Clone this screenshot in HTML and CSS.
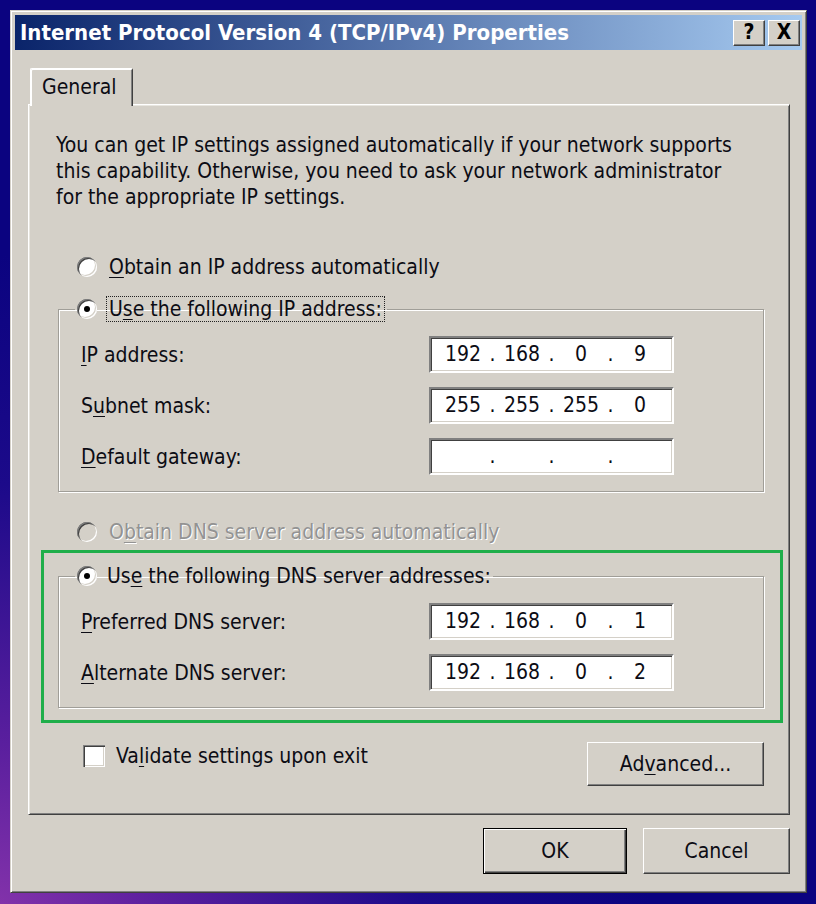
FILE: index.html
```html
<!DOCTYPE html>
<html lang="en">
<head>
  <meta charset="UTF-8">
  <meta name="viewport" content="width=device-width, initial-scale=1.0">
  <title>Internet Protocol Version 4 (TCP/IPv4) Properties</title>
  <link rel="stylesheet" href="styles.css">
</head>
<body>
  <div class="window">
    <div class="titlebar">
      <span class="title">Internet Protocol Version 4 (TCP/IPv4) Properties</span>
      <div class="title-buttons">
        <button class="title-btn">?</button>
        <button class="title-btn">X</button>
      </div>
    </div>

    <div class="client">
      <div class="tabs">
        <div class="tab">General</div>
      </div>

      <div class="panel">
        <p class="intro">You can get IP settings assigned automatically if your network supports<br>
          this capability. Otherwise, you need to ask your network administrator<br>
          for the appropriate IP settings.</p>

        <label class="option first">
          <span class="radio"></span>
          <span><u>O</u>btain an IP address automatically</span>
        </label>

        <fieldset class="group">
          <legend>
            <label class="option">
              <span class="radio checked"></span>
              <span class="focus">U<u>s</u>e the following IP address:</span>
            </label>
          </legend>
          <div class="rows">
            <div class="row">
              <span><u>I</u>P address:</span>
              <div class="ip"><span class="oct">192</span><span class="dot">.</span><span class="oct">168</span><span class="dot">.</span><span class="oct">0</span><span class="dot">.</span><span class="oct">9</span></div>
            </div>
            <div class="row">
              <span>S<u>u</u>bnet mask:</span>
              <div class="ip"><span class="oct">255</span><span class="dot">.</span><span class="oct">255</span><span class="dot">.</span><span class="oct">255</span><span class="dot">.</span><span class="oct">0</span></div>
            </div>
            <div class="row">
              <span><u>D</u>efault gateway:</span>
              <div class="ip"><span class="oct"></span><span class="dot">.</span><span class="oct"></span><span class="dot">.</span><span class="oct"></span><span class="dot">.</span><span class="oct"></span></div>
            </div>
          </div>
        </fieldset>

        <label class="option disabled">
          <span class="radio"></span>
          <span>O<u>b</u>tain DNS server address automatically</span>
        </label>

        <div class="highlight">
          <fieldset class="group">
            <legend>
              <label class="option">
                <span class="radio checked"></span>
                <span class="plain">Us<u>e</u> the following DNS server addresses:</span>
              </label>
            </legend>
            <div class="rows">
              <div class="row">
                <span><u>P</u>referred DNS server:</span>
                <div class="ip"><span class="oct">192</span><span class="dot">.</span><span class="oct">168</span><span class="dot">.</span><span class="oct">0</span><span class="dot">.</span><span class="oct">1</span></div>
              </div>
              <div class="row">
                <span><u>A</u>lternate DNS server:</span>
                <div class="ip"><span class="oct">192</span><span class="dot">.</span><span class="oct">168</span><span class="dot">.</span><span class="oct">0</span><span class="dot">.</span><span class="oct">2</span></div>
              </div>
            </div>
          </fieldset>
        </div>

        <div class="panel-footer">
          <label class="check">
            <span class="checkbox"></span>
            <span>Va<u>l</u>idate settings upon exit</span>
          </label>
          <button class="btn advanced">Ad<u>v</u>anced...</button>
        </div>
      </div>

      <div class="dialog-buttons">
        <button class="btn default">OK</button>
        <button class="btn cancel">Cancel</button>
      </div>
    </div>
  </div>
</body>
</html>
```

FILE: styles.css
```css
* {
  box-sizing: border-box;
}
body {
  margin: 0;
  height: 904px;
  padding: 10px 9px 0 10px;
  font-family: "DejaVu Sans Condensed", "DejaVu Sans", sans-serif;
  font-stretch: condensed;
  font-size: 21px;
  color: #0c0c14;
  background: radial-gradient(circle at 0 100%, #8232aa 0, #5a1f9e 160px, #1c0a8a 420px, #0b0380 650px);
  overflow: hidden;
}
u {
  text-decoration-thickness: 1px;
  text-underline-offset: 3px;
}

/* window frame */
.window {
  width: 797px;
  height: 883px;
  padding: 4px;
  background: #d4d0c8;
  border: 1px solid;
  border-color: #d4d0c8 #404040 #404040 #d4d0c8;
  box-shadow: inset 1px 1px 0 #fff, inset -1px -1px 0 #808080;
}
.titlebar {
  height: 35px;
  display: flex;
  align-items: center;
  justify-content: space-between;
  padding: 0 2px 0 5px;
  background: linear-gradient(to right, #0a246a, #a6caf0);
}
.title {
  color: #fff;
  font-weight: bold;
  font-size: 22px;
}
.title-buttons {
  display: flex;
  gap: 3px;
}
.title-btn {
  width: 32px;
  height: 26px;
  padding: 0;
  font-family: inherit;
  font-size: 21px;
  font-weight: bold;
  line-height: 1;
  background: #d4d0c8;
  border: 1px solid;
  border-color: #fff #404040 #404040 #fff;
  box-shadow: inset -1px -1px 0 #808080;
}

.client {
  padding: 18px 12px 0 13px;
}

/* tab strip */
.tabs {
  display: flex;
  height: 36px;
  padding-left: 2px;
}
.tab {
  position: relative;
  z-index: 1;
  width: 103px;
  height: 38px;
  padding: 6px 0 0 11px;
  background: #d4d0c8;
  border: 1px solid;
  border-bottom: none;
  border-color: #fff #404040 #404040 #fff;
  border-radius: 2px 2px 0 0;
  box-shadow: inset 1px 1px 0 #fff, inset -1px 0 0 #808080;
}
.panel {
  width: 762px;
  padding: 27px 25px 28px 29px;
  border: 1px solid;
  border-color: #fff #404040 #404040 #fff;
  box-shadow: inset 1px 1px 0 #e8e6e0, inset -1px -1px 0 #808080;
}
.intro {
  margin: 0 0 0 -2px;
  line-height: 26px;
}

/* radio options */
.option {
  display: flex;
  align-items: center;
  height: 26px;
  gap: 12px;
  padding-left: 19px;
  line-height: 26px;
}
.option.first {
  margin-top: 44px;
}
.radio {
  position: relative;
  flex: none;
  width: 20px;
  height: 20px;
  border-radius: 50%;
  background: #fff;
  box-shadow: inset 1px 1px 0 #808080, inset 2px 2px 0 #404040, inset -1px -1px 0 #fff, inset -2px -2px 0 #d4d0c8;
}
.radio.checked::after {
  content: "";
  position: absolute;
  left: 7px;
  top: 7px;
  width: 6px;
  height: 6px;
  border-radius: 50%;
  background: #000;
}
.option.disabled {
  margin-top: 27px;
  color: #939393;
  text-shadow: 1px 1px 0 #fff;
}
.option.disabled .radio {
  background: #d4d0c8;
}
.focus {
  margin-left: -3px;
  padding: 0 2px;
  line-height: 24px;
  border: 1px dotted #222;
}
.plain {
  margin-left: -2px;
}

/* group boxes */
.group {
  margin: 16px 0 0;
  padding: 0;
  border: 1px solid #a09e98;
  box-shadow: 1px 1px 0 #fff, inset 1px 1px 0 #fff;
}
.group legend {
  margin-left: 16px;
  padding: 0 2px;
}
.group legend .option {
  padding-left: 0;
}
.rows {
  display: flex;
  flex-direction: column;
  gap: 14px;
  padding: 14px 89px 16px 22px;
}
.row {
  display: flex;
  align-items: center;
  justify-content: space-between;
}
.ip {
  display: flex;
  width: 245px;
  height: 37px;
  padding-left: 7px;
  line-height: 33px;
  background: #fff;
  border: 2px solid;
  border-color: #808080 #fff #fff #808080;
  box-shadow: inset 1px 1px 0 #404040, inset -1px -1px 0 #d4d0c8;
}
.oct {
  width: 50px;
  text-align: center;
}
.dot {
  width: 9px;
  text-align: center;
}

.highlight {
  margin: 5px -19px 0 -17px;
  padding: 10px 16px 12px 14px;
  border: 3px solid #1fae4a;
}
.highlight .group {
  margin-top: 0;
}

.panel-footer {
  display: flex;
  justify-content: space-between;
  align-items: flex-start;
  margin-top: 19px;
}
.check {
  display: flex;
  align-items: center;
  gap: 11px;
  height: 26px;
  margin-top: 1px;
  padding-left: 25px;
}
.checkbox {
  width: 22px;
  height: 22px;
  background: #fff;
  box-shadow: inset 1px 1px 0 #808080, inset 2px 2px 0 #404040, inset -1px -1px 0 #fff, inset -2px -2px 0 #d4d0c8;
}

/* push buttons */
.btn {
  padding: 0;
  font-family: inherit;
  font-stretch: condensed;
  font-size: 21px;
  color: #0c0c14;
  background: #d4d0c8;
  border: 1px solid;
  border-color: #fff #404040 #404040 #fff;
  box-shadow: inset -1px -1px 0 #808080;
}
.advanced {
  width: 177px;
  height: 44px;
}
.dialog-buttons {
  display: flex;
  justify-content: flex-end;
  gap: 16px;
  margin-top: 13px;
}
.default {
  width: 144px;
  height: 46px;
  border-color: #000;
  box-shadow: inset 1px 1px 0 #fff, inset -1px -1px 0 #404040, inset -2px -2px 0 #808080;
}
.cancel {
  width: 147px;
  height: 46px;
}
```
